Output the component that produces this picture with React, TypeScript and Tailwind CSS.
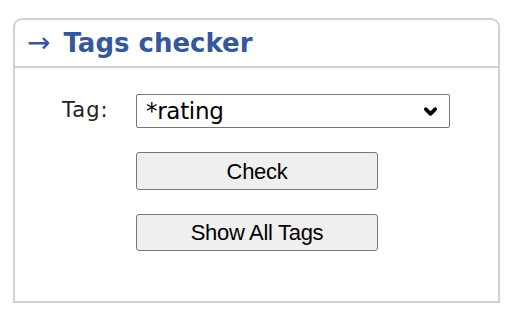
import { ChevronDown } from 'lucide-react'

export default function App() {
  return (
    <div className="w-[512px] h-[320px] bg-white pt-[18px] pl-[13px]" style={{ fontFamily: 'Verdana, "DejaVu Sans", sans-serif' }}>
      <div className="w-[487px] h-[285px] border-2 border-[#d2d2d2] rounded-t-[9px] flex flex-col">
        {/* Header */}
        <div className="h-[48px] border-b-2 border-[#d2d2d2] flex items-center pl-[12px]">
          <h2 className="text-[26px] font-bold text-[#34589a] leading-none flex items-center" style={{ fontFamily: '"DejaVu Sans", Verdana, sans-serif' }}>
            <span className="font-normal mr-[13px] text-[28px]">→</span>
            <span>Tags checker</span>
          </h2>
        </div>

        {/* Body */}
        <div className="grid grid-cols-[74px_314px] pl-[47px] pt-[26px] gap-y-[24px]">
          <label className="text-[21px] text-[#222] self-center tracking-[1px]" style={{ fontFamily: '"DejaVu Sans", sans-serif' }}>
            Tag:
          </label>
          <div className="relative h-[34px] border border-[#767676] rounded-[2px] flex items-center pl-[9px]">
            <span className="text-[23px] text-black leading-none tracking-[-0.3px]" style={{ fontFamily: '"DejaVu Sans", sans-serif' }}>*rating</span>
            <ChevronDown className="absolute right-[9px] top-[7px] w-[19px] h-[19px] text-black" strokeWidth={4.5} />
          </div>

          <div />
          <div className="flex flex-col gap-[24px]">
            <button className="w-[242px] h-[38px] bg-[#efefef] border border-[#767676] rounded-[3px] text-[22px] text-black tracking-[-0.3px]" style={{ fontFamily: '"Liberation Sans", Arial, sans-serif' }}>
              Check
            </button>
            <button className="w-[242px] h-[37px] bg-[#efefef] border border-[#767676] rounded-[3px] text-[22px] text-black tracking-[-0.3px]" style={{ fontFamily: '"Liberation Sans", Arial, sans-serif' }}>
              Show All Tags
            </button>
          </div>
        </div>
      </div>
    </div>
  )
}
